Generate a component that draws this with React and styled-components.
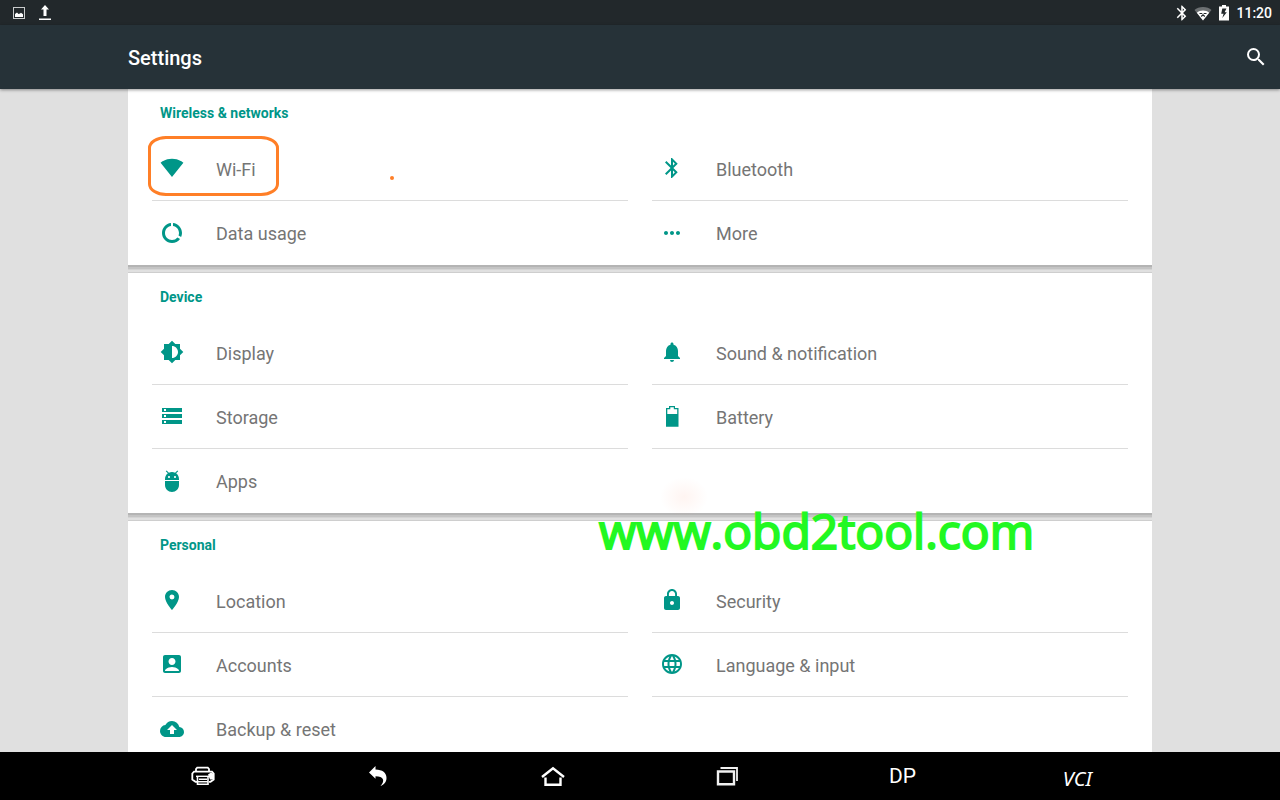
import React from 'react'
import styled, { createGlobalStyle } from 'styled-components'
import {
  MdAccountBox,
  MdAdb,
  MdBackup,
  MdBluetooth,
  MdBrightness6,
  MdDataUsage,
  MdLanguage,
  MdLocationOn,
  MdLock,
  MdMoreHoriz,
  MdNotifications,
  MdSearch,
  MdStorage,
} from 'react-icons/md'

const WifiIcon = () => (
  <svg width="24" height="24" viewBox="0 0 24 24" fill="currentColor">
    <path d="M12 20.900.6 6.700C1 6.400 5 2.700 12 2.700S23 6.400 23.400 6.700L12 20.900z" />
  </svg>
)

const BatteryIcon = () => (
  <svg width="24" height="24" viewBox="0 0 24 24" fill="currentColor">
    <path fillRule="evenodd" d="M6 4h3V2h6v2h3.500v18.700H6V4zm1.300 1.300V10h9.900V5.300h-3.400v-2h-3.500v2z" />
  </svg>
)

const PictureIcon = () => (
  <svg width="14" height="14" viewBox="0 0 14 14">
    <rect x="1.500" y="1.500" width="11" height="11" fill="none" stroke="#c9cbcc" />
    <path fill="#fff" d="M3 11V8l2-1.500 1.500 1.500L8 7.500l1-.8 2 1.600V11z" />
  </svg>
)

const UploadIcon = () => (
  <svg width="12" height="16" viewBox="0 0 12 16" fill="#fff">
    <path d="M6 0 10 4.500H7.500V11H4.500V4.500H2zM0 13.500h12V15H0z" />
  </svg>
)

const StatusBluetoothIcon = () => (
  <svg width="12" height="18" viewBox="4 0 16 24" fill="#fff">
    <path d="M17.710 7.710 12 2h-1v7.590L6.410 5 5 6.410 10.590 12 5 17.590 6.410 19 11 14.410V22h1l5.710-5.710-4.300-4.290 4.300-4.290zM13 5.830l1.880 1.880L13 9.590V5.830zm1.880 10.460L13 18.170v-3.760l1.880 1.880z" />
  </svg>
)

const StatusWifiIcon = () => (
  <svg width="18" height="16" viewBox="0 0 18 16">
    <path fill="#6c7072" d="M9 15.500.5 5C2.500 3.200 5.500 2 9 2s6.500 1.200 8.500 3z" />
    <path fill="#fff" d="M9 15.500 2.800 7.800C4.500 6.200 6.600 5.500 9 5.500s4.500.7 6.200 2.300z" />
    <path fill="none" stroke="#22282b" strokeWidth="1.200" d="M5.500 8.500h2.800M9.700 8.500h2.800M7.200 11.500 9 9.800l1.800 1.700" />
  </svg>
)

const StatusBatteryIcon = () => (
  <svg width="12" height="18" viewBox="0 0 12 18">
    <path fill="#fff" d="M1 2.500h3V1h4v1.500h3V16.500H1z" />
    <path fill="#22282b" d="M8.500 4.500H4.300L3.200 9.800h2.400L4.300 14 8.800 8.200H6.600z" />
  </svg>
)

const PrinterIcon = () => (
  <svg width="24" height="20" viewBox="0 0 24 20" fill="none" stroke="#fff">
    <path strokeWidth="1.800" d="M5 5V3l1.200-1.300h10.600L18 3v2" />
    <path strokeWidth="1.800" d="M6 15.800H4.500L1.300 13.500V7.500L3 5.700h18l1.700 1.800v6l-3.200 2.300H18" />
    <path strokeWidth="1.400" d="M5 10.300h14" />
    <path strokeWidth="1.600" d="M6.500 11v7.300h10.500V11M7 15.800h10M8 13.200h8" />
    <path fill="#fff" stroke="none" d="M17 8.500 20 6.500l3 1.500v5.500h-4z" />
  </svg>
)

const BackIcon = () => (
  <svg width="20" height="20" viewBox="0 0 20 20" fill="#fff">
    <path d="M1 6.500 7.500 0v3.500c7 .2 11 3 11 8.500 0 4-2.500 6.700-6 8 2.500-2.700 3-5 2.500-6.500-.8-2.400-3.500-3.200-7.500-3.200v2.500z" />
  </svg>
)

const HomeIcon = () => (
  <svg width="24" height="20" viewBox="0 0 24 20" fill="none" stroke="#fff" strokeWidth="2.400">
    <path d="M1 11 12 2.300 23 11M4.500 11.500V18.800h15V11.500" />
  </svg>
)

const RecentIcon = () => (
  <svg width="22" height="20" viewBox="0 0 22 20" fill="none" stroke="#f0f0f0">
    <path strokeWidth="2.400" d="M2 5.500h16v12.800H2z" />
    <path strokeWidth="1.800" d="M4.500 2H21v13" />
  </svg>
)

const sections = [
  {
    title: 'Wireless & networks',
    items: [
      { label: 'Wi-Fi', icon: WifiIcon, marked: true },
      { label: 'Bluetooth', icon: MdBluetooth },
      { label: 'Data usage', icon: MdDataUsage },
      { label: 'More', icon: MdMoreHoriz },
    ],
  },
  {
    title: 'Device',
    items: [
      { label: 'Display', icon: MdBrightness6 },
      { label: 'Sound & notification', icon: MdNotifications },
      { label: 'Storage', icon: MdStorage },
      { label: 'Battery', icon: BatteryIcon },
      { label: 'Apps', icon: MdAdb },
    ],
  },
  {
    title: 'Personal',
    items: [
      { label: 'Location', icon: MdLocationOn },
      { label: 'Security', icon: MdLock },
      { label: 'Accounts', icon: MdAccountBox },
      { label: 'Language & input', icon: MdLanguage },
      { label: 'Backup & reset', icon: MdBackup },
    ],
  },
]

const App = () => {
  return (
    <Screen>
      <GlobalStyle />
      <StatusBar>
        <StatusGroup $gap="13px">
          <PictureIcon />
          <UploadIcon />
        </StatusGroup>
        <StatusGroup $gap="6px">
          <StatusBluetoothIcon />
          <StatusWifiIcon />
          <StatusBatteryIcon />
          <Clock>11:20</Clock>
        </StatusGroup>
      </StatusBar>
      <AppBar>
        <Title>Settings</Title>
        <SearchButton aria-label="Search">
          <MdSearch size={24} />
        </SearchButton>
      </AppBar>
      <Content>
        {sections.map(({ title, items }) => (
          <Card key={title}>
            <CardTitle>{title}</CardTitle>
            <Tiles>
              {items.map(({ label, icon: Icon, marked }, i) => (
                <Tile key={label} $divider={i < Math.floor((items.length - 1) / 2) * 2}>
                  <Icon size={24} />
                  <TileLabel>{label}</TileLabel>
                  {marked && <Marker />}
                </Tile>
              ))}
            </Tiles>
          </Card>
        ))}
        <Dot />
        <Smudge />
        <Watermark>www.obd2tool.com</Watermark>
      </Content>
      <NavBar>
        <NavButton aria-label="Print"><PrinterIcon /></NavButton>
        <NavButton aria-label="Back"><BackIcon /></NavButton>
        <NavButton aria-label="Home"><HomeIcon /></NavButton>
        <NavButton aria-label="Recent apps"><RecentIcon /></NavButton>
        <NavButton>DP</NavButton>
        <NavButton $italic>VCI</NavButton>
      </NavBar>
    </Screen>
  )
}

export default App

const GlobalStyle = createGlobalStyle`
  * {
    box-sizing: border-box;
  }
  body {
    margin: 0;
    font-family: Roboto, sans-serif;
  }
  button {
    border: none;
    padding: 0;
    background: transparent;
    cursor: pointer;
  }
`

const Screen = styled.div`
  display: flex;
  flex-direction: column;
  height: 100vh;
  overflow: hidden;
  background: #e0e0e0;
`

const StatusBar = styled.header`
  display: flex;
  flex: none;
  align-items: center;
  justify-content: space-between;
  height: 25px;
  padding: 0 8px 0 12px;
  background: #22282b;
  color: #fff;
`

const StatusGroup = styled.div`
  display: flex;
  align-items: center;
  gap: ${({ $gap }) => $gap};
`

const Clock = styled.span`
  font-size: 14px;
  font-weight: 500;
  line-height: 24px;
`

const AppBar = styled.div`
  display: flex;
  flex: none;
  align-items: center;
  justify-content: space-between;
  height: 64px;
  padding: 0 12px 0 10%;
  background: #263238;
  color: #fff;
  box-shadow: 0 1px 3px rgba(0, 0, 0, 0.4);
  z-index: 1;
`

const Title = styled.h1`
  margin: 0;
  padding-top: 2px;
  font-size: 20px;
  font-weight: 500;
  line-height: 24px;
`

const SearchButton = styled.button`
  display: flex;
  color: #fff;
`

const Content = styled.main`
  position: relative;
  display: flex;
  flex: 1;
  flex-direction: column;
  gap: 8px;
  min-height: 0;
  padding: 0 10%;
  overflow: hidden;
`

const Card = styled.section`
  flex: none;
  padding: 0 24px;
  background: #fff;
  box-shadow: 0 -1px 0 #cecece, 0 2px 0 #b4b4b4, 0 4px 0 #c4c4c4, 0 5px 0 #d4d4d4;
`

const CardTitle = styled.h2`
  margin: 0;
  padding-left: 8px;
  color: #009688;
  font-size: 14px;
  font-weight: 700;
  line-height: 48px;
`

const Tiles = styled.div`
  display: grid;
  grid-template-columns: 1fr 1fr;
  column-gap: 24px;
`

const Tile = styled.button`
  position: relative;
  display: flex;
  align-items: center;
  gap: 32px;
  height: 64px;
  padding: 0 8px 1px;
  border-bottom: ${({ $divider }) => ($divider ? '1px solid #dcdcdc' : 'none')};
  color: #009688;
  font-family: Roboto, sans-serif;
  text-align: left;
`

const TileLabel = styled.span`
  padding-top: 3px;
  color: #757575;
  font-size: 18px;
  line-height: 24px;
`

/* hand-drawn highlight around a tile */
const Marker = styled.span`
  position: absolute;
  top: -1px;
  left: -4px;
  width: 131px;
  height: 60px;
  border: 3px solid #ff7f27;
  border-radius: 18px / 12px;
`

const Dot = styled.span`
  position: absolute;
  top: 87px;
  left: 390px;
  width: 4px;
  height: 4px;
  border-radius: 50%;
  background: #ff7f27;
`

const Smudge = styled.span`
  position: absolute;
  top: 388px;
  left: 660px;
  width: 48px;
  height: 40px;
  background: radial-gradient(closest-side, rgba(255, 120, 80, 0.08), transparent);
`

const Watermark = styled.span`
  position: absolute;
  top: 408px;
  left: 599px;
  color: #22f822;
  font-family: 'Open Sans', sans-serif;
  font-size: 48px;
  font-weight: 500;
  line-height: 68px;
  -webkit-text-stroke: 2px #22f822;
`

const NavBar = styled.nav`
  display: grid;
  flex: none;
  grid-template-columns: repeat(6, 1fr);
  height: 48px;
  padding: 0 9%;
  background: #000;
`

const NavButton = styled.button`
  display: flex;
  align-items: center;
  justify-content: center;
  padding-top: ${({ $italic }) => ($italic ? '4px' : '0')};
  color: #fff;
  font-family: ${({ $italic }) => ($italic ? "'Noto Sans'" : 'Roboto')}, sans-serif;
  font-size: ${({ $italic }) => ($italic ? '20px' : '21px')};
  font-style: ${({ $italic }) => ($italic ? 'italic' : 'normal')};
`
